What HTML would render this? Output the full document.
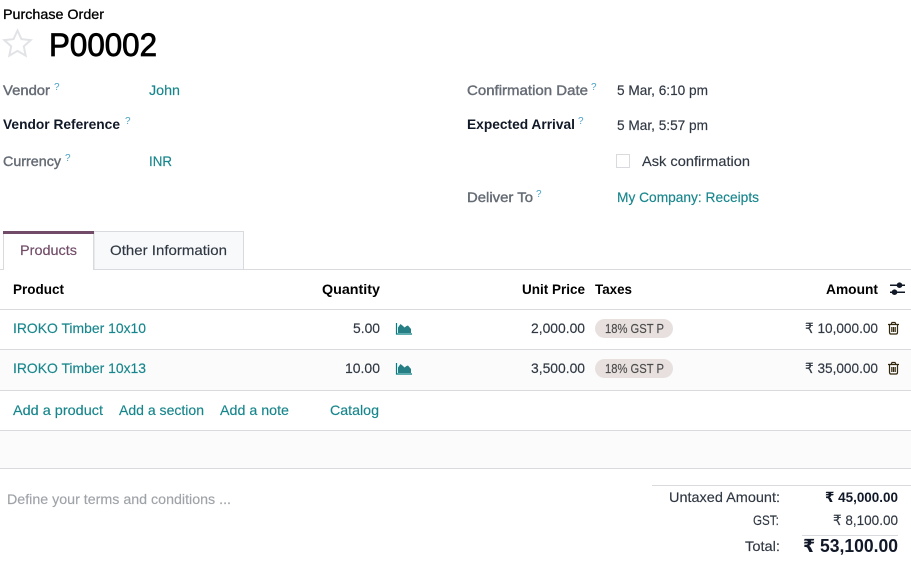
<!DOCTYPE html>
<html><head><meta charset="utf-8"><style>
html,body{margin:0;padding:0;background:#fff;width:911px;height:561px;overflow:hidden}
svg{display:block}
text{font-family:"Liberation Sans","DejaVu Sans",sans-serif;font-size:14px;fill:#2f3742;stroke:#2f3742;stroke-width:.15px}
.lab{fill:#666c75;stroke:#666c75;stroke-width:.4px}
.b{font-weight:bold;fill:#111827;stroke:none}
.h{font-weight:bold;fill:#000;stroke:none}
.l{fill:#17868c;stroke:#17868c}
.q{font-size:10px;fill:#4aa3c4;stroke:none}
.ph{fill:#9fa3a8;stroke:#9fa3a8}
.pill{font-size:13px;fill:#4b4b4b;stroke:#4b4b4b}
</style></head><body>
<svg width="911" height="561" viewBox="0 0 911 561" xmlns="http://www.w3.org/2000/svg">
<text x="3" y="19" textLength="101" lengthAdjust="spacingAndGlyphs" style="fill:#000;stroke:#000;stroke-width:.3px">Purchase Order</text>
<path d="M17.500 30.500l3.900 8.600 9.300 1-6.900 6.300 1.900 9.200-8.200-4.700-8.200 4.700 1.900-9.200-6.900-6.300 9.300-1z" fill="none" stroke="#e2e3e6" stroke-width="2"/>
<text x="49" y="56" textLength="108" lengthAdjust="spacingAndGlyphs" style="font-size:32px;fill:#000;stroke:#000;stroke-width:.8px">P00002</text>

<text x="3" y="95" textLength="47" lengthAdjust="spacingAndGlyphs" class="lab">Vendor</text>
<text x="54" y="90" class="q">?</text>
<text x="149" y="95" textLength="31" lengthAdjust="spacingAndGlyphs" class="l">John</text>
<text x="3" y="129" textLength="117" lengthAdjust="spacingAndGlyphs" class="b">Vendor Reference</text>
<text x="125" y="124" class="q">?</text>
<text x="3" y="166" textLength="58" lengthAdjust="spacingAndGlyphs" class="lab">Currency</text>
<text x="65" y="161" class="q">?</text>
<text x="149" y="166" textLength="23" lengthAdjust="spacingAndGlyphs" class="l">INR</text>

<text x="467" y="95" textLength="121" lengthAdjust="spacingAndGlyphs" class="lab">Confirmation Date</text>
<text x="591" y="90" class="q">?</text>
<text x="617" y="95" textLength="91" lengthAdjust="spacingAndGlyphs">5 Mar, 6:10 pm</text>
<text x="467" y="129" textLength="108" lengthAdjust="spacingAndGlyphs" class="b">Expected Arrival</text>
<text x="578" y="124" class="q">?</text>
<text x="617" y="130" textLength="91" lengthAdjust="spacingAndGlyphs">5 Mar, 5:57 pm</text>
<rect x="616.500" y="154.500" width="13" height="13" fill="#fff" stroke="#d8dadd"/>
<text x="642" y="166" textLength="108" lengthAdjust="spacingAndGlyphs">Ask confirmation</text>
<text x="467" y="202" textLength="66" lengthAdjust="spacingAndGlyphs" class="lab">Deliver To</text>
<text x="536" y="197" class="q">?</text>
<text x="617" y="202" textLength="142" lengthAdjust="spacingAndGlyphs" class="l">My Company: Receipts</text>

<!-- tabs -->
<rect x="94" y="231.500" width="149.500" height="38" fill="#f8f9fa" stroke="#d8dadd"/>
<rect x="0" y="269" width="911" height="1" fill="#d8dadd"/>
<rect x="3" y="232" width="91" height="38" fill="#fff"/>
<rect x="3" y="233" width="1" height="37" fill="#d8dadd"/>
<rect x="93" y="233" width="1" height="37" fill="#d8dadd"/>
<rect x="3" y="231" width="91" height="3" fill="#714b67"/>
<text x="20" y="255" textLength="57" lengthAdjust="spacingAndGlyphs" style="fill:#714b67;stroke:#714b67">Products</text>
<text x="110" y="255" textLength="117" lengthAdjust="spacingAndGlyphs">Other Information</text>

<!-- header -->
<text x="13" y="294" textLength="51" lengthAdjust="spacingAndGlyphs" class="h">Product</text>
<text x="322" y="294" textLength="58" lengthAdjust="spacingAndGlyphs" class="h">Quantity</text>
<text x="522" y="294" textLength="63" lengthAdjust="spacingAndGlyphs" class="h">Unit Price</text>
<text x="595" y="294" textLength="37" lengthAdjust="spacingAndGlyphs" class="h">Taxes</text>
<text x="826" y="294" textLength="52" lengthAdjust="spacingAndGlyphs" class="h">Amount</text>
<g fill="#111827">
<rect x="890" y="284.500" width="15" height="1.500"/><circle cx="899.500" cy="285.200" r="2.800"/>
<rect x="890" y="291.500" width="15" height="1.500"/><circle cx="894.500" cy="292.200" r="2.800"/>
</g>

<rect x="0" y="309" width="911" height="1" fill="#d8dadd"/>
<rect x="0" y="350" width="911" height="40" fill="#fbfbfb"/>
<rect x="0" y="349" width="911" height="1" fill="#d8dadd"/>
<rect x="0" y="390" width="911" height="1" fill="#d8dadd"/>

<!-- row 1 -->
<text x="13" y="333" textLength="133" lengthAdjust="spacingAndGlyphs" class="l">IROKO Timber 10x10</text>
<text x="353" y="333" textLength="27" lengthAdjust="spacingAndGlyphs">5.00</text>
<path d="M396.500 323v11h15.500" fill="none" stroke="#017e84" stroke-width="1.200"/><path d="M398 333v-5.500l2.500-3.500 2.500 2 1.500 1.500 2-1.500 1.500-.5 3 3.500v4z" fill="#267f84"/>
<text x="531" y="333" textLength="54" lengthAdjust="spacingAndGlyphs">2,000.00</text>
<rect x="595" y="319" width="78" height="19" rx="9.500" fill="#e7e0df"/>
<text x="605" y="333" textLength="59" lengthAdjust="spacingAndGlyphs" class="pill">18% GST P</text>
<text x="805" y="333" textLength="73" lengthAdjust="spacingAndGlyphs">₹ 10,000.00</text>
<g fill="none" stroke="#33280f" stroke-width="1.200"><path d="M888 324.500h11M891 324.500l1-2h3l1 2M889.500 324.500v8q0 1.500 1.500 1.500h5q1.500 0 1.500-1.500v-8M891.800 327v5M893.500 327v5M895.200 327v5"/></g>

<!-- row 2 -->
<text x="13" y="373" textLength="133" lengthAdjust="spacingAndGlyphs" class="l">IROKO Timber 10x13</text>
<text x="345" y="373" textLength="35" lengthAdjust="spacingAndGlyphs">10.00</text>
<g transform="translate(0 40)"><path d="M396.500 323v11h15.500" fill="none" stroke="#017e84" stroke-width="1.200"/><path d="M398 333v-5.500l2.500-3.500 2.500 2 1.500 1.500 2-1.500 1.500-.5 3 3.500v4z" fill="#267f84"/></g>
<text x="531" y="373" textLength="54" lengthAdjust="spacingAndGlyphs">3,500.00</text>
<rect x="595" y="359" width="78" height="19" rx="9.500" fill="#e7e0df"/>
<text x="605" y="373" textLength="59" lengthAdjust="spacingAndGlyphs" class="pill">18% GST P</text>
<text x="805" y="373" textLength="73" lengthAdjust="spacingAndGlyphs">₹ 35,000.00</text>
<g transform="translate(0 40)" fill="none" stroke="#33280f" stroke-width="1.200"><path d="M888 324.500h11M891 324.500l1-2h3l1 2M889.500 324.500v8q0 1.500 1.500 1.500h5q1.500 0 1.500-1.500v-8M891.800 327v5M893.500 327v5M895.200 327v5"/></g>

<!-- add -->
<text x="13" y="415" textLength="90" lengthAdjust="spacingAndGlyphs" class="l">Add a product</text>
<text x="119" y="415" textLength="85" lengthAdjust="spacingAndGlyphs" class="l">Add a section</text>
<text x="220" y="415" textLength="69" lengthAdjust="spacingAndGlyphs" class="l">Add a note</text>
<text x="330" y="415" textLength="49" lengthAdjust="spacingAndGlyphs" class="l">Catalog</text>

<rect x="0" y="431" width="911" height="37" fill="#fbfbfb"/>
<rect x="0" y="430" width="911" height="1" fill="#d8dadd"/>
<rect x="0" y="468" width="911" height="1" fill="#d8dadd"/>

<text x="7" y="504" textLength="224" lengthAdjust="spacingAndGlyphs" class="ph">Define your terms and conditions ...</text>

<!-- totals -->
<rect x="652" y="485" width="259" height="1" fill="#d8dadd"/>
<text x="669" y="502" textLength="111" lengthAdjust="spacingAndGlyphs">Untaxed Amount:</text>
<text x="825" y="502" textLength="73" lengthAdjust="spacingAndGlyphs" class="b">₹ 45,000.00</text>
<text transform="translate(753 525) scale(.83 1)" x="0" y="0">GST:</text>
<text x="833" y="525" textLength="65" lengthAdjust="spacingAndGlyphs">₹ 8,100.00</text>
<rect x="802" y="535" width="96" height="1" fill="#d8dadd"/>
<text x="745" y="551" textLength="35" lengthAdjust="spacingAndGlyphs">Total:</text>
<text x="803" y="552" textLength="95" lengthAdjust="spacingAndGlyphs" class="b" style="font-size:18px">₹ 53,100.00</text>
</svg>
</body></html>
